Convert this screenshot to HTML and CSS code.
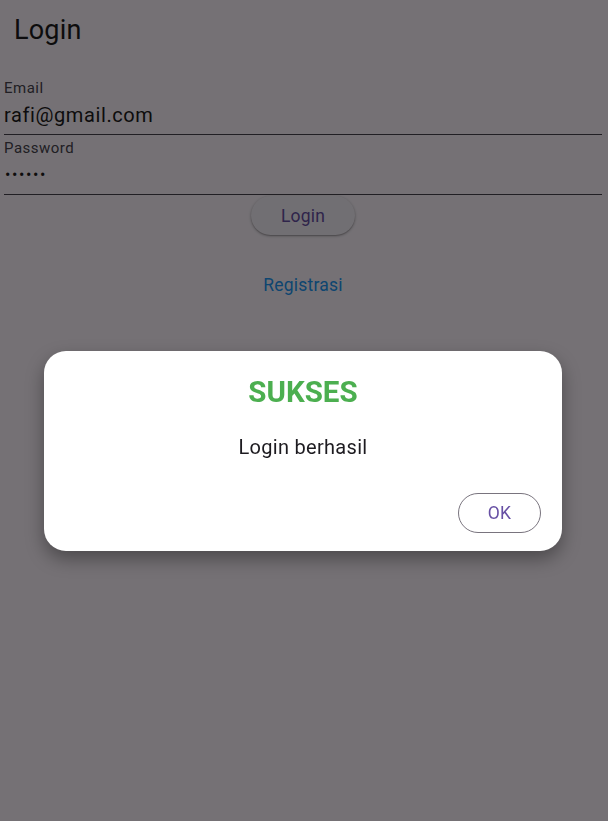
FILE: index.html
```html
<!DOCTYPE html>
<html>
<head>
<meta charset="utf-8">
<link rel="stylesheet" href="styles.css">
</head>
<body>
<div class="app">
  <header class="appbar"><h1 class="title">Login</h1></header>
  <main class="form">
    <div class="field">
      <label class="label">Email</label>
      <div class="value">rafi@gmail.com</div>
    </div>
    <div class="field">
      <label class="label">Password</label>
      <div class="value dots">••••••</div>
    </div>
    <div class="btn-row"><button class="login-btn">Login</button></div>
    <div class="reg-row"><span class="reg">Registrasi</span></div>
  </main>
</div>
<div class="scrim"></div>
<div class="dialog">
  <div class="d-title">SUKSES</div>
  <div class="d-text">Login berhasil</div>
  <div class="d-actions"><button class="ok-btn">OK</button></div>
</div>
</body>
</html>
```
FILE: styles.css
```css
* { box-sizing: border-box; }
html, body { margin: 0; padding: 0; }
body {
  width: 608px; height: 821px; overflow: hidden;
  background: #fef7ff;
  font-family: Roboto, "Liberation Sans", sans-serif;
  color: #1d1b20;
}
.app { width: 608px; height: 821px; }
.appbar { height: 64px; display: flex; align-items: center; padding: 0 14px; }
.title { margin: 0 0 4px; font-size: 27px; font-weight: 400; color: #1d1b20; letter-spacing: 0.2px; }
.form { padding: 11px 6px 0 4px; display: flex; flex-direction: column; }
.field { height: 60px; border-bottom: 1.5px solid #49454f; display: flex; flex-direction: column; padding-top: 4px; }
.label { font-size: 15px; line-height: 18px; letter-spacing: 0.5px; color: #49454f; }
.value { font-size: 20px; line-height: 28px; letter-spacing: 0.6px; color: #1d1b20; margin-top: 4px; }
.dots { font-size: 16px; letter-spacing: 1.6px; padding-left: 1px; }
.btn-row { display: flex; justify-content: center; margin-top: 1px; }
.login-btn {
  width: 104px; height: 39px; border: none; border-radius: 20px;
  background: #f7f2fa; color: #6750a4;
  font-family: inherit; font-size: 17.5px; letter-spacing: 0.2px;
  box-shadow: 0 1px 3px rgba(0,0,0,0.3), 0 1px 1px rgba(0,0,0,0.15);
}
.reg-row { display: flex; justify-content: center; margin-top: 40px; }
.reg { font-size: 17.5px; color: #2196f3; letter-spacing: 0.2px; }
.scrim { position: fixed; inset: 0; background: rgba(0,0,0,0.54); }
.dialog {
  position: absolute; left: 44px; top: 351px; width: 518px; height: 200px;
  background: #ffffff; border-radius: 22px;
  box-shadow: 0 8px 18px rgba(0,0,0,0.35);
  padding: 24px 21px 20px 24px;
  display: flex; flex-direction: column; align-items: center;
}
.d-title { font-size: 29.5px; font-weight: 700; color: #4caf50; line-height: 34px; margin-top: 0; padding-right: 3px; }
.d-text { font-size: 20px; color: #1d1b20; line-height: 24px; margin-top: 26px; letter-spacing: 0.3px; padding-right: 3px; }
.d-actions { align-self: stretch; display: flex; justify-content: flex-end; margin-top: 34px; }
.ok-btn {
  width: 83px; height: 40px; border: 1.2px solid #79747e; border-radius: 20px;
  background: transparent; color: #6750a4;
  font-family: inherit; font-size: 17.5px; letter-spacing: 0.2px;
}
```
